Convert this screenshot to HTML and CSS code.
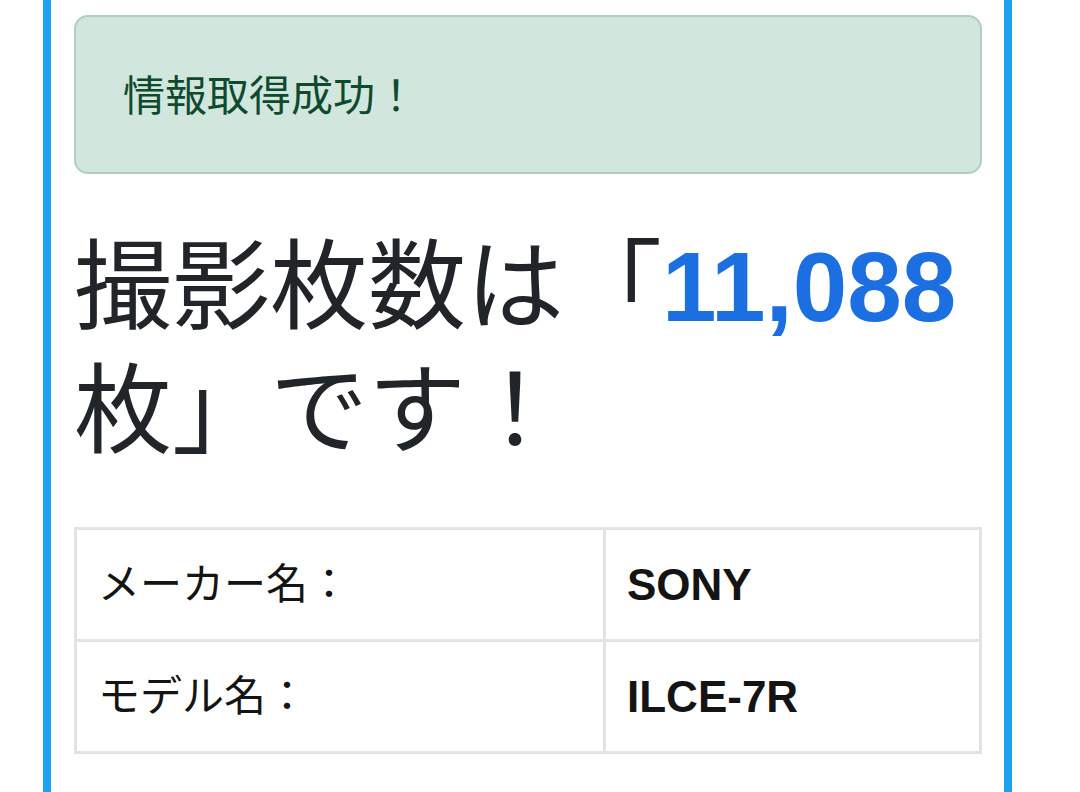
FILE: index.html
```html
<!DOCTYPE html>
<html lang="ja">
<head>
<meta charset="utf-8">
<title>撮影枚数</title>
<link rel="stylesheet" href="styles.css">
</head>
<body>
<div class="page">
  <div class="alert">情報取得成功！</div>
  <h1 class="result">撮影枚数は「<span class="count">11,088</span>枚」です！</h1>
  <table class="info">
    <tr>
      <td class="label">メーカー名：</td>
      <td class="value">SONY</td>
    </tr>
    <tr>
      <td class="label">モデル名：</td>
      <td class="value">ILCE-7R</td>
    </tr>
  </table>
</div>
</body>
</html>
```
FILE: styles.css
```css
html, body {
  margin: 0;
  padding: 0;
  background: #ffffff;
}
body {
  font-family: "Liberation Sans", "Noto Sans CJK JP", sans-serif;
  color: #212529;
}
.page {
  box-sizing: border-box;
  margin-left: 43px;
  width: 969px;
  min-height: 792px;
  border-left: 8px solid #1da1f2;
  border-right: 8px solid #1da1f2;
  padding: 15px 22px 0 23px;
}
.alert {
  box-sizing: border-box;
  height: 159px;
  padding: 48px 47px 44px;
  font-size: 42px;
  line-height: 63px;
  color: #0f4a2e;
  background: #d1e7dd;
  border: 2px solid #aed0c0;
  border-radius: 14px;
}
.result {
  margin: 51px 0 54px 0;
  font-size: 98px;
  line-height: 124px;
  font-weight: 400;
  color: #212529;
}
.count {
  font-weight: 700;
  color: #1b6fe1;
}
.info {
  width: 100%;
  border-collapse: collapse;
  font-size: 42px;
  line-height: 63px;
}
.info td {
  border: 3px solid #e1e3e8;
  padding: 23px 21px;
  color: #141414;
}
.label {
  width: 484px;
}
.value {
  font-weight: 700;
  font-size: 44px;
}
```
